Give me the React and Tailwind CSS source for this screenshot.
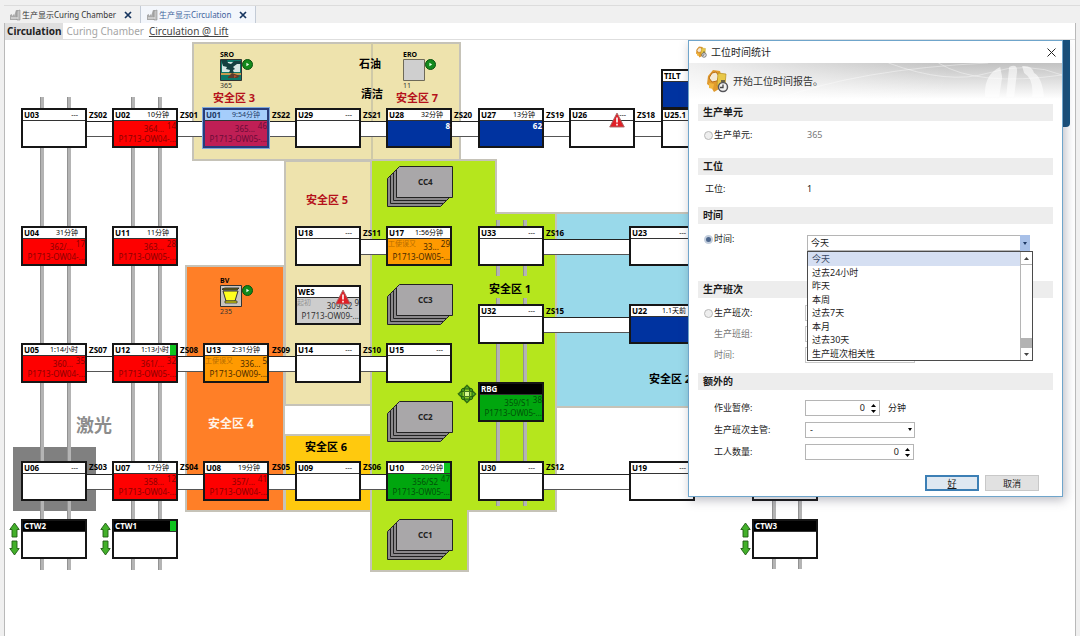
import React, { useState } from 'react';

/* ─── Plant layout, in canvas units ─── */
const zones = [
  { points: '188,3 455,3 455,120 188,120', fill: '#eee3ad' },
  { points: '280,121 367,121 367,365 280,365', fill: '#eee3ad' },
  { points: '181,226 279,226 279,471 181,471', fill: '#ff7f27' },
  { points: '280,395 367,395 367,471 280,471', fill: '#ffc90e' },
  { points: '551,173 700,173 700,367 551,367', fill: '#99d9ea' },
  { points: '366,120 491,120 491,173 551,173 551,471 463,471 463,531 366,531', fill: '#b5e61d' },
];

const rails = [
  { x: 35, y: 57, h: 473 },
  { x: 62, y: 57, h: 473 },
  { x: 126, y: 57, h: 473 },
  { x: 153, y: 57, h: 473 },
  { x: 491, y: 180, h: 56 },
  { x: 518, y: 180, h: 56 },
  { x: 491, y: 258, h: 208 },
  { x: 518, y: 258, h: 208 },
  { x: 767, y: 440, h: 89 },
  { x: 793, y: 440, h: 89 },
];

const belts = [
  { x: 82, y: 81, w: 580 },
  { x: 350, y: 199, w: 36 },
  { x: 535, y: 199, w: 94 },
  { x: 535, y: 277, w: 94 },
  { x: 82, y: 316, w: 304 },
  { x: 82, y: 434, w: 304 },
  { x: 535, y: 434, w: 94 },
];

const tones = {
  empty: { body: 'bg-white', text: 'text-black' },
  red: { body: 'bg-[#fe0000]', text: 'text-[#8c0000]' },
  orange: { body: 'bg-[#ff9a00]', text: 'text-[#4a2a00]' },
  blue: { body: 'bg-[#0033a0]', text: 'text-white' },
  gray: { body: 'bg-[#cdcdcd]', text: 'text-[#333]' },
  green: { body: 'bg-[#00a60e]', text: 'text-[#005208]' },
  picked: { body: 'bg-[#bf1f55]', text: 'text-[#6b0c38]' },
};

const stations = [
  { id: 'U03', x: 16, y: 68, time: '---' },
  { id: 'U02', x: 107, y: 68, time: '10分钟', tone: 'red', count: '14', job: '364...', part: 'P1713-OW04-...' },
  { id: 'U01', x: 198, y: 68, time: '9:54分钟', tone: 'picked', count: '46', job: '365...', part: 'P1713-OW05-...' },
  { id: 'U29', x: 290, y: 68, time: '---' },
  { id: 'U28', x: 381, y: 68, time: '32分钟', tone: 'blue', count: '8' },
  { id: 'U27', x: 473, y: 68, time: '13分钟', tone: 'blue', count: '62' },
  { id: 'U26', x: 564, y: 68, time: '---', alarm: true },
  { id: 'TILT', x: 656, y: 29, tone: 'blue' },
  { id: 'U25.1', x: 656, y: 68 },
  { id: 'U04', x: 16, y: 186, time: '31分钟', tone: 'red', count: '17', job: '362/...', part: 'P1713-OW04-...' },
  { id: 'U11', x: 107, y: 186, time: '11分钟', tone: 'red', count: '28', job: '363...', part: 'P1713-OW05-...' },
  { id: 'U18', x: 290, y: 186, time: '---' },
  { id: 'U17', x: 381, y: 186, time: '1:56分钟', tone: 'orange', count: '29', note: '工使误又', job: '33...', part: 'P1713-OW05-...' },
  { id: 'U33', x: 473, y: 186, time: '---' },
  { id: 'U23', x: 624, y: 186, time: '---' },
  { id: 'WES', x: 290, y: 245, tone: 'gray', count: '9', note: '起初', job: '309/S2', part: 'P1713-OW09-...', alarm: true },
  { id: 'U32', x: 473, y: 264, time: '---' },
  { id: 'U22', x: 624, y: 264, time: '1.1天前', tone: 'blue', count: '7' },
  { id: 'U05', x: 16, y: 303, time: '1:14小时', tone: 'red', count: '35', job: '360...', part: 'P1713-OW04-...' },
  { id: 'U12', x: 107, y: 303, time: '1:13小时', tone: 'red', count: '32', job: '361/...', part: 'P1713-OW05-...', flag: true },
  { id: 'U13', x: 198, y: 303, time: '2:31分钟', tone: 'orange', count: '5', note: '工使误又', job: '336...', part: 'P1713-OW09-...' },
  { id: 'U14', x: 290, y: 303, time: '---' },
  { id: 'U15', x: 381, y: 303, time: '---' },
  { id: 'RBG', x: 473, y: 342, tone: 'green', dark: true, count: '38', job: '359/S1', part: 'P1713-OW05-...' },
  { id: 'U06', x: 16, y: 421, time: '---' },
  { id: 'U07', x: 107, y: 421, time: '17分钟', tone: 'red', count: '12', job: '358...', part: 'P1713-OW04-...' },
  { id: 'U08', x: 198, y: 421, time: '19分钟', tone: 'red', count: '41', job: '357/...', part: 'P1713-OW04-...' },
  { id: 'U09', x: 290, y: 421, time: '---' },
  { id: 'U10', x: 381, y: 421, time: '20分钟', tone: 'green', count: '47', job: '356/S2', part: 'P1713-OW05-...', flag: true },
  { id: 'U30', x: 473, y: 421, time: '---' },
  { id: 'U19', x: 624, y: 421, time: '---' },
  { id: 'U20', x: 747, y: 421 },
  { id: 'CTW2', x: 16, y: 479, dark: true, lift: true },
  { id: 'CTW1', x: 107, y: 479, dark: true, lift: true, flag: true },
  { id: 'CTW3', x: 747, y: 479, dark: true, lift: true },
];

const tag = 'text-[8px] font-bold text-black';
const redZone = 'text-[11px] font-bold text-[#b5121b]';
const darkZone = 'text-[11px] font-bold text-black';

const labels = [
  { text: 'ZS02', x: 84, y: 75, style: tag },
  { text: 'ZS01', x: 175, y: 75, style: tag },
  { text: 'ZS22', x: 267, y: 75, style: tag },
  { text: 'ZS21', x: 358, y: 75, style: tag },
  { text: 'ZS20', x: 449, y: 75, style: tag },
  { text: 'ZS19', x: 541, y: 75, style: tag },
  { text: 'ZS18', x: 632, y: 75, style: tag },
  { text: 'ZS11', x: 358, y: 193, style: tag },
  { text: 'ZS16', x: 541, y: 193, style: tag },
  { text: 'ZS15', x: 541, y: 271, style: tag },
  { text: 'ZS07', x: 84, y: 310, style: tag },
  { text: 'ZS08', x: 175, y: 310, style: tag },
  { text: 'ZS09', x: 267, y: 310, style: tag },
  { text: 'ZS10', x: 358, y: 310, style: tag },
  { text: 'ZS03', x: 84, y: 427, style: tag },
  { text: 'ZS04', x: 175, y: 427, style: tag },
  { text: 'ZS05', x: 267, y: 427, style: tag },
  { text: 'ZS06', x: 358, y: 427, style: tag },
  { text: 'ZS12', x: 541, y: 427, style: tag },
  { text: '安全区 3', x: 208, y: 57, style: redZone },
  { text: '安全区 7', x: 391, y: 57, style: redZone },
  { text: '安全区 5', x: 301, y: 159, style: redZone },
  { text: '安全区 4', x: 203, y: 384, style: 'text-[12px] font-bold text-[#fff3e6]' },
  { text: '安全区 6', x: 300, y: 406, style: darkZone },
  { text: '安全区 1', x: 484, y: 248, style: darkZone },
  { text: '安全区 2', x: 644, y: 338, style: darkZone },
  { text: '石油', x: 354, y: 23, style: darkZone },
  { text: '清洁', x: 356, y: 53, style: darkZone },
  { text: '激光', x: 71, y: 385, style: 'text-[18px] font-bold text-[#8c8c8c]' },
];

const devices = [
  { id: 'SRO', x: 215, y: 10, value: '365' },
  { id: 'ERO', x: 398, y: 10, value: '11' },
  { id: 'BV', x: 215, y: 236, value: '235' },
];

const stacks = [
  { id: 'CC4', x: 382, y: 126 },
  { id: 'CC3', x: 382, y: 244 },
  { id: 'CC2', x: 382, y: 361 },
  { id: 'CC1', x: 382, y: 479 },
];

const periods = ['今天', '过去24小时', '昨天', '本周', '过去7天', '本月', '过去30天', '生产班次相关性'];

/* ─── Icons ─── */
const Icon = {
  Plant: () => (
    <svg className="h-3 w-3 shrink-0" viewBox="0 0 12 12">
      <path d="M1 11V6l2-1v2l2-2v2l2-6h2v10z" fill="#a9a9a9" />
      <path d="M8 2l3-1v10H8z" fill="#c4c4c4" stroke="#8f8f8f" strokeWidth="0.6" />
      <path d="M2 9h7" stroke="#efefef" />
    </svg>
  ),
  Close: () => (
    <svg className="h-2 w-2" viewBox="0 0 8 8">
      <path d="M1 1l6 6M7 1L1 7" stroke="#17355f" strokeWidth="1.7" />
    </svg>
  ),
  Alarm: () => (
    <svg className="h-4 w-4" viewBox="0 0 16 16">
      <path d="M8 1L15.3 15H.7z" fill="#e01f26" stroke="#a56b6b" strokeWidth="0.9" strokeLinejoin="round" />
      <path d="M8 5.5v5M8 11.8v1.6" stroke="#fff" strokeWidth="1.6" />
    </svg>
  ),
  Lift: () => (
    <svg className="h-[34px] w-[11px]" viewBox="0 0 11 34">
      <g fill="#43b02a" stroke="#1f5c14" strokeWidth="0.9">
        <path d="M5.5 1L10.2 7.5H8V15H3V7.5H.8z" />
        <path d="M5.5 33L10.2 26.5H8V19H3v7.5H.8z" />
      </g>
    </svg>
  ),
  Shuttle: () => (
    <svg className="h-5 w-5" viewBox="0 0 20 20">
      <path d="M10 .8L19.2 10 10 19.2.8 10z" fill="#8fd02a" stroke="#245c0d" strokeWidth="0.8" />
      <g fill="#4fae22" stroke="#1d520b" strokeWidth="0.9">
        <path d="M10 1.5l3 3.5H7zM10 18.500l3-3.500H7zM1.500 10l3.500-3v6zM18.500 10l-3.500-3v6z" />
        <circle cx="6" cy="6" r="1.5" />
        <circle cx="14" cy="6" r="1.5" />
        <circle cx="6" cy="14" r="1.5" />
        <circle cx="14" cy="14" r="1.5" />
      </g>
      <path d="M7.5 7.5h5v5h-5z" fill="#d8f78f" stroke="#245c0d" strokeWidth="0.8" />
    </svg>
  ),
  Running: () => (
    <svg className="h-[11px] w-[11px]" viewBox="0 0 11 11">
      <circle cx="5.5" cy="5.5" r="5" fill="#138a1c" stroke="#0a5010" />
      <path d="M4.4 3.8L7.2 5.5 4.4 7.2z" fill="#e6ffe6" />
    </svg>
  ),
  SRO: () => (
    <svg className="h-[22px] w-[22px]" viewBox="0 0 22 22">
      <path d="M.5.5h21v21H.5z" fill="#0d7868" stroke="#333" />
      <path d="M2 3h18v10H2z" fill="#d6e7e3" />
      <path d="M1 1h6l1 3 3 1 3-3h7v3h-4l-4 3 2 2-2 1 1 3H9l1-3-4-1 1-2-4-1z" fill="#15403f" />
      <path d="M1 14h20v2H1z" fill="#c79a4d" />
      <path d="M8 18l4-4 8 3-3 2H8z" fill="#5e3b2b" />
      <path d="M14 16l3 1-3 2z" fill="#b4502d" />
    </svg>
  ),
  ERO: () => (
    <svg className="h-[22px] w-[22px]" viewBox="0 0 22 22">
      <path d="M.5.5h21v21H.5z" fill="#cfcfcf" stroke="#6e6a58" />
    </svg>
  ),
  BV: () => (
    <svg className="h-[22px] w-[22px]" viewBox="0 0 22 22">
      <path d="M.5.5h21v21H.5z" fill="#c9c5be" stroke="#333" />
      <path d="M2 4l3-1h14l-2 2H3z" fill="#6b6a1c" stroke="#222" strokeWidth="0.8" />
      <path d="M3 6h15l-3 10H6z" fill="#ffff1f" stroke="#333" />
      <path d="M5 16h12v2H5z" fill="#e6e000" stroke="#333" strokeWidth="0.8" />
    </svg>
  ),
  Report: ({ className }) => (
    <svg className={className} viewBox="0 0 24 24">
      <path d="M8 1l7 1 2 7-4 5 1 6-5 3-3-5-4-3 1-8z" fill="#e09a2d" />
      <path d="M7 4l4-1 3 4-2 5-5 1-3-4z" fill="#f4ead6" stroke="#bb6f16" />
      <path d="M13 4l8 1-1 11-8 1z" fill="#e8c849" stroke="#b58c1c" strokeWidth="0.7" />
      <path d="M4 14l5 1-1 5-4-1z" fill="#f1b63c" />
      <circle cx="18" cy="18" r="4.5" fill="#f2f2f2" stroke="#55555a" strokeWidth="1.5" />
      <path d="M18 15.500v3h-3M16 12h4" stroke="#444" strokeWidth="1.3" fill="none" />
    </svg>
  ),
};

const PlantFloor = () => (
  <svg className="absolute left-0 top-0" width="1070" height="596">
    <path d="M8 407h83v64H8z" fill="#808080" />
    {zones.map((z) => (
      <polygon key={z.points} points={z.points} fill={z.fill} stroke="#c6c3b8" strokeWidth="2" />
    ))}
    <path d="M367 3v117" stroke="#cfc9a8" strokeWidth="2" />
    {rails.map((r) => (
      <g key={`${r.x}-${r.y}`}>
        <rect x={r.x} y={r.y} width="4" height={r.h} fill="#b4b4b4" />
        <rect x={r.x} y={r.y} width="1" height={r.h} fill="#929292" />
      </g>
    ))}
    {belts.map((b) => (
      <g key={`${b.x}-${b.y}`}>
        <rect x={b.x} y={b.y} width={b.w} height="15" fill="#fff" />
        <rect x={b.x} y={b.y} width={b.w} height="1" fill="#222" />
        <rect x={b.x} y={b.y + 15} width={b.w} height="1" fill="#555" />
      </g>
    ))}
  </svg>
);

const Station = ({ s }) => {
  const tone = tones[s.tone || 'empty'];
  const picked = s.tone === 'picked';
  return (
    <div className="absolute" style={{ left: s.x, top: s.y }}>
      <div className={`flex h-10 w-[66px] flex-col border-2 ${picked ? 'border-[#283c7a] outline outline-1 outline-[#7fa9dc]' : 'border-[#161616]'} ${tone.body}`}>
        <div className={`flex h-[11px] shrink-0 justify-between border-b border-[#333] ${s.dark ? 'bg-black text-white' : picked ? 'bg-[#a5cdfb] text-[#223a66]' : 'bg-white text-black'}`}>
          <span className="pl-px text-[8px] leading-[10px] font-bold">{s.id}</span>
          <span className="flex">
            <span className={`text-[7px] leading-[10px] ${s.flag ? 'pr-px' : 'pr-[7px]'}`}>{s.time}</span>
            {s.flag && <span className="w-[6px] bg-[#0fc41f]" />}
          </span>
        </div>
        <div className={`text-right text-[8px] ${tone.text}`}>
          <div className="flex h-3 justify-end gap-[2px]">
            {s.note && <span className="flex-1 text-left text-[7px] leading-[10px] whitespace-nowrap opacity-40">{s.note}</span>}
            <span className="leading-[15px]">{s.job}</span>
            <span className={`leading-[9px] ${s.tone === 'blue' ? 'font-bold' : ''} ${s.note ? '' : 'min-w-[10px]'}`}>{s.count}</span>
          </div>
          <div className="leading-[12px] whitespace-nowrap">{s.part}</div>
        </div>
      </div>
      {s.alarm && <span className="absolute top-1 left-10"><Icon.Alarm /></span>}
      {s.lift && <span className="absolute top-[3px] -left-3"><Icon.Lift /></span>}
    </div>
  );
};

const Device = ({ d }) => {
  const Picture = Icon[d.id];
  return (
    <div className="absolute w-9 text-[7px] leading-[9px] text-[#333]" style={{ left: d.x, top: d.y }}>
      <div className="font-bold text-black">{d.id}</div>
      <div className="flex">
        <Picture />
        <Icon.Running />
      </div>
      <div>{d.value}</div>
    </div>
  );
};

const Stack = ({ s }) => (
  <div className="absolute" style={{ left: s.x, top: s.y }}>
    <svg width="66" height="41" viewBox="0 0 66 41">
      {[9, 6, 3].map((o) => (
        <path key={o} d={`M${9.5 - o} ${3.5 + o}L${12.5 - o} ${0.5 + o}H${65.5 - o}V${28.5 + o}L${62.5 - o} ${31.5 + o}H${9.5 - o}z`} fill="#8b898b" stroke="#222" />
      ))}
      <path d="M9.5 3.5L12.5.5H65.5V31.5H9.5z" fill="#a9a7a9" stroke="#222" />
    </svg>
    <span className="absolute top-[11px] left-[31px] text-[8px] leading-[10px] font-bold text-[#222]">{s.id}</span>
  </div>
);

/* ─── Dialog parts ─── */
const Section = ({ title, className, children }) => (
  <section className={className}>
    <h2 className="h-[17px] bg-[#ededed] pl-[5px] text-[10px] leading-[17px] font-bold text-[#1c1c1c]">{title}</h2>
    {children}
  </section>
);

const Row = ({ label, htmlFor, muted, children }) => (
  <div className="flex h-4 items-center">
    <label htmlFor={htmlFor} className={`w-[107px] shrink-0 pl-4 ${muted ? 'text-[#777]' : ''}`}>{label}</label>
    {children}
  </div>
);

const RadioRow = ({ id, label, checked, onChange, children }) => (
  <div className="flex h-4 items-center">
    <div className="flex w-[109px] shrink-0 items-center gap-px pl-[6px]">
      <input
        id={id}
        type="radio"
        name="scope"
        checked={checked}
        onChange={onChange}
        className="h-[9px] w-[9px] appearance-none rounded-full border border-[#b9b9b9] bg-[#eee] checked:border-2 checked:border-[#c3cedd] checked:bg-[#4c668c]"
      />
      <label htmlFor={id}>{label}</label>
    </div>
    {children}
  </div>
);

const Spinner = ({ id, value, setValue, className }) => (
  <div className={`flex h-4 items-center border border-[#b5b5b5] bg-white ${className}`}>
    <input
      id={id}
      value={value}
      inputMode="numeric"
      onChange={(e) => setValue(Number(e.target.value) || 0)}
      className="w-full min-w-0 flex-1 pr-[2px] text-right outline-none"
    />
    <div className="flex w-3 flex-col items-center gap-[3px]">
      <button type="button" aria-label="+" onClick={() => setValue(value + 1)}>
        <svg className="block h-[3px] w-[5px]" viewBox="0 0 5 3"><path d="M0 3L2.5 0 5 3z" /></svg>
      </button>
      <button type="button" aria-label="-" onClick={() => setValue(Math.max(0, value - 1))}>
        <svg className="block h-[3px] w-[5px]" viewBox="0 0 5 3"><path d="M0 0h5L2.5 3z" /></svg>
      </button>
    </div>
  </div>
);

const PeriodSelect = ({ period, setPeriod }) => (
  <div className="relative mt-2 h-4 w-[223px]">
    <select
      aria-label="时间"
      value={period}
      onChange={(e) => setPeriod(e.target.value)}
      className="block h-4 w-full appearance-none border border-[#b5b5b5] bg-white pl-[3px] outline-none"
    >
      {periods.map((p) => <option key={p}>{p}</option>)}
    </select>
    <span className="pointer-events-none absolute top-0 right-0 flex h-4 w-[10px] items-center justify-center bg-[#a8c0e8]">
      <svg className="h-[3px] w-[4px]" viewBox="0 0 4 3"><path d="M0 0h4L2 3z" fill="#1d3763" /></svg>
    </span>
    <div className="absolute top-4 left-0 z-10 flex h-[110px] w-[226px] border border-[#4b4b4b] bg-white">
      <ul role="listbox" className="grid flex-1 grid-rows-8">
        {periods.map((p) => (
          <li
            key={p}
            role="option"
            aria-selected={p === period}
            onClick={() => setPeriod(p)}
            className={`flex items-center pl-1 leading-none ${p === period ? 'bg-[#d5dff2] text-[#3b4a66]' : ''}`}
          >
            {p}
          </li>
        ))}
      </ul>
      <div className="flex w-3 flex-col border-l border-[#b5b5b5]">
        <span className="flex h-[13px] items-center justify-center border-b border-[#b5b5b5]">
          <svg className="h-[3px] w-[5px]" viewBox="0 0 5 3"><path d="M0 3L2.5 0 5 3z" fill="#444" /></svg>
        </span>
        <span className="flex-1" />
        <span className="h-[10px] bg-[#b3b3b3]" />
        <span className="flex h-3 items-center justify-center">
          <svg className="h-[3px] w-[5px]" viewBox="0 0 5 3"><path d="M0 0h5L2.5 3z" fill="#444" /></svg>
        </span>
      </div>
    </div>
  </div>
);

const TimeDialog = () => {
  const [scope, setScope] = useState('time');
  const [period, setPeriod] = useState('今天');
  const [pause, setPause] = useState(0);
  const [workers, setWorkers] = useState(0);

  return (
    <div role="dialog" aria-label="工位时间统计" className="absolute top-0 left-[683px] w-[375px] border border-[#6fa5cb] bg-white pb-[5px] text-[9px] text-[#1c1c1c] shadow-[2px_3px_10px_rgba(60,60,80,0.35)]">
      <header className="flex h-[22px] items-center gap-1 pr-[6px] pl-[6px]">
        <Icon.Report className="h-3 w-3" />
        <h1 className="flex-1 text-[10px]">工位时间统计</h1>
        <button type="button" aria-label="关闭">
          <svg className="h-[9px] w-[9px]" viewBox="0 0 9 9"><path d="M.5.5l8 8M8.5.5l-8 8" stroke="#222" /></svg>
        </button>
      </header>

      <div className="relative flex h-9 items-center gap-1 bg-linear-to-b from-[#c2c2c2] to-white pl-4">
        <svg className="absolute inset-0 h-full w-full" viewBox="0 0 374 36" preserveAspectRatio="none">
          <defs>
            <linearGradient id="fade" x1="0" x2="1">
              <stop offset="0" stopColor="#fff" stopOpacity="0.75" />
              <stop offset="0.7" stopColor="#fff" stopOpacity="0" />
            </linearGradient>
          </defs>
          <path d="M0 0h374v36H0z" fill="url(#fade)" />
          <path d="M90 36Q170 6 300 0M200 0Q260 22 300 10T374 12M250 0q40 24 124 12" stroke="#fff" strokeOpacity="0.4" fill="none" />
          <path d="M297 34q-2-22 15-30l2 10-3 20zM318 34l3-30q8-4 8 4l-3 26zM334 3q10-1 12 7 8 4 10 24h-12q2-18-8-24z" fill="#fff" opacity="0.6" />
        </svg>
        <Icon.Report className="relative h-6 w-6" />
        <p className="relative text-[10px] text-[#333]">开始工位时间报告。</p>
      </div>

      <form className="pt-[5px] pr-[9px] pl-[9px]" onSubmit={(e) => e.preventDefault()}>
        <Section title="生产单元" className="pb-[15px]">
          <div className="pt-[6px]">
            <RadioRow id="unit" label="生产单元:" checked={scope === 'unit'} onChange={() => setScope('unit')}>
              <span className="text-[#777]">365</span>
            </RadioRow>
          </div>
        </Section>

        <Section title="工位" className="pb-[10px]">
          <div className="flex h-[22px] items-center pt-[6px]">
            <span className="w-[109px] pl-[7px]">工位:</span>
            <span>1</span>
          </div>
        </Section>

        <Section title="时间" className="pb-[34px]">
          <div className="pt-[7px]">
            <RadioRow id="time" label="时间:" checked={scope === 'time'} onChange={() => setScope('time')}>
              <PeriodSelect period={period} setPeriod={setPeriod} />
            </RadioRow>
          </div>
        </Section>

        <Section title="生产班次" className="pb-[10px]">
          <div className="flex flex-col gap-[5px] pt-[7px]">
            <RadioRow id="shift" label="生产班次:" checked={scope === 'shift'} onChange={() => setScope('shift')}>
              <input aria-label="生产班次" disabled className="-ml-[2px] h-4 w-[110px] border border-[#c9c9c9]" />
            </RadioRow>
            <Row label="生产班组:" htmlFor="team" muted>
              <input id="team" disabled className="h-4 w-[110px] border border-[#c9c9c9]" />
            </Row>
            <Row label="时间:" htmlFor="shift-time" muted>
              <input id="shift-time" disabled className="h-4 w-[110px] border border-[#c9c9c9]" />
            </Row>
          </div>
        </Section>

        <Section title="额外的">
          <div className="flex flex-col gap-[6px] pt-[10px]">
            <Row label="作业暂停:" htmlFor="pause">
              <Spinner id="pause" value={pause} setValue={setPause} className="w-[75px]" />
              <span className="pl-2">分钟</span>
            </Row>
            <Row label="生产班次主管:" htmlFor="lead">
              <div className="relative w-[110px]">
                <select id="lead" className="block h-4 w-full appearance-none border border-[#b5b5b5] bg-white pl-1 outline-none">
                  <option>-</option>
                </select>
                <svg className="pointer-events-none absolute top-[6px] right-[3px] h-[3px] w-[4px]" viewBox="0 0 4 3"><path d="M0 0h4L2 3z" /></svg>
              </div>
            </Row>
            <Row label="工人数量:" htmlFor="workers">
              <Spinner id="workers" value={workers} setValue={setWorkers} className="w-[109px]" />
            </Row>
          </div>
        </Section>

        <div className="flex justify-end gap-[6px] pt-[15px] pr-[14px]">
          <button type="submit" className="h-4 w-[54px] border-2 border-[#3c7fb5] bg-[#dfe8f1] leading-none underline">好</button>
          <button type="button" className="h-4 w-[54px] border border-[#c8c8c8] bg-[#e1e1e1] leading-none">取消</button>
        </div>
      </form>
    </div>
  );
};

const Tab = ({ label, active }) => (
  <div className={`flex items-center gap-2 border-r border-[#c3cbd6] pr-2 pl-[5px] ${active ? 'bg-[#f3f6fb] text-[#41639b]' : 'text-[#333]'}`}>
    <button type="button" className="flex items-center gap-px text-[8px] whitespace-nowrap">
      <Icon.Plant />
      {label}
    </button>
    <button type="button" aria-label="关闭"><Icon.Close /></button>
  </div>
);

const App = () => (
  <div className="flex h-screen flex-col overflow-hidden bg-[#f0f0f0] font-['Noto_Sans','Noto_Sans_CJK_SC',sans-serif]">
    <nav className="mt-[5px] ml-1 flex h-[18px] border-t border-[#dcdcdc]">
      <Tab label="生产显示Curing Chamber" />
      <Tab label="生产显示Circulation" active />
    </nav>

    <div className="mx-1 flex min-h-0 flex-1 flex-col border-x border-[#b9b9b9] bg-white">
      <nav className="flex h-[17px] shrink-0 items-center border-b border-[#dedede] text-[10px] leading-[16px]">
        <a href="#circulation" className="bg-[#dfdfdf] px-[2px] font-bold text-[#222]">Circulation</a>
        <a href="#chamber" className="px-[3px] text-[#a5a5a5]">Curing Chamber</a>
        <a href="#lift" className="px-[2px] text-[#444] underline">Circulation @ Lift</a>
      </nav>

      <main className="relative min-h-0 flex-1 overflow-hidden">
        <PlantFloor />
        {stacks.map((s) => <Stack key={s.id} s={s} />)}
        {stations.map((s) => <Station key={s.id} s={s} />)}
        {devices.map((d) => <Device key={d.id} d={d} />)}
        {labels.map((l) => (
          <span key={l.text} className={`absolute -translate-y-1/2 leading-none whitespace-nowrap ${l.style}`} style={{ left: l.x, top: l.y }}>
            {l.text}
          </span>
        ))}
        <span className="absolute top-[344px] left-[452px]"><Icon.Shuttle /></span>
        <div className="absolute top-0 left-[1050px] h-[87px] w-[15px] rounded-b bg-[#15527f]" />
        <TimeDialog />
      </main>
    </div>
  </div>
);

export default App;
